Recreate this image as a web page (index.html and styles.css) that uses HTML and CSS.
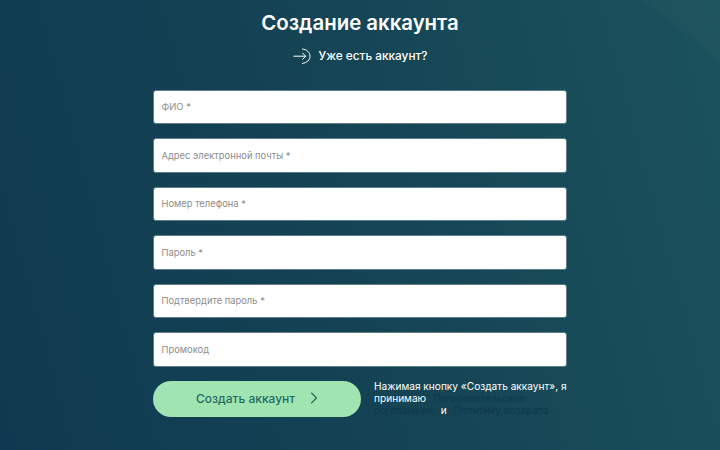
FILE: index.html
```html
<!DOCTYPE html>
<html lang="ru">
<head>
<meta charset="utf-8">
<title>Создание аккаунта</title>
<link rel="stylesheet" href="styles.css">
</head>
<body>
<main class="page">
  <h1 class="title">Создание аккаунта</h1>
  <div class="login">
    <svg class="login-icon" width="18" height="16" viewBox="0 0 18 16" fill="none" stroke="#fff" stroke-width="1" stroke-linecap="round" stroke-linejoin="round">
      <path d="M0.8 8.2h11.7M9.5 5 12.7 8.2 9.5 11.4"/>
      <path d="M9.5 1c4.5.6 7.5 3.4 7.5 7.200s-3 6.600-7.500 7.200"/>
    </svg>
    <span>Уже есть аккаунт?</span>
  </div>
  <form class="form">
    <div class="field">ФИО *</div>
    <div class="field">Адрес электронной почты *</div>
    <div class="field">Номер телефона *</div>
    <div class="field">Пароль *</div>
    <div class="field">Подтвердите пароль *</div>
    <div class="field">Промокод</div>
    <div class="actions">
      <button class="submit" type="button">
        <span>Создать аккаунт</span>
        <svg width="8" height="12" viewBox="0 0 8 12" fill="none" stroke="#1f6a62" stroke-width="1.1" stroke-linecap="round" stroke-linejoin="round"><path d="M1.500 1 6.500 6l-5 5"/></svg>
      </button>
      <p class="terms">Нажимая кнопку «Создать аккаунт», я принимаю <a class="link link-start">Пользовательское</a> <a class="link link-end">соглашение</a> и <a class="link">Политику возврата</a></p>
    </div>
  </form>
</main>
</body>
</html>
```
FILE: styles.css
```css
* { box-sizing: border-box; }
html, body { margin: 0; height: 100%; }
body {
  width: 720px;
  height: 450px;
  overflow: hidden;
  font-family: Inter, "Liberation Sans", sans-serif;
  background:
    linear-gradient(37.6deg, transparent 748px, rgba(255, 255, 255, 0.015) 748px),
    linear-gradient(75deg, #0f3950 0%, #154455 50%, #1b525c 100%);
  color: #fff;
}
.page { display: flex; flex-direction: column; align-items: center; padding-top: 10px; }
.title { margin: 0; font-size: 20.4px; line-height: 26px; font-weight: 600; }
.login { display: flex; align-items: center; gap: 8px; margin-top: 11px; height: 18px; font-size: 11.8px; font-weight: 500; }
.form { width: 414px; margin-top: 24.5px; display: flex; flex-direction: column; gap: 14px; }
.field {
  height: 34.5px;
  padding-left: 7.5px;
  display: flex;
  align-items: center;
  background: #fff;
  border: 1px solid #5d7d89;
  border-radius: 3px;
  font-size: 9.4px;
  color: #8c8c8c;
}
.actions { display: flex; gap: 13px; }
.submit {
  flex: none;
  width: 208px;
  height: 36.5px;
  border: 0;
  border-radius: 18px;
  background: #a0e4b1;
  color: #1f6a62;
  font: 500 12px Inter, "Liberation Sans", sans-serif;
  display: flex;
  align-items: center;
  justify-content: center;
  gap: 15px;
  padding: 0 0 1px;
}
.terms { margin: -0.5px 0 0; width: 193px; font-size: 10.15px; line-height: 12px; }
.link { color: #0e394c; padding: 0 4px; }
.link-start { padding-right: 0; }
.link-end { padding-left: 0; }
```
